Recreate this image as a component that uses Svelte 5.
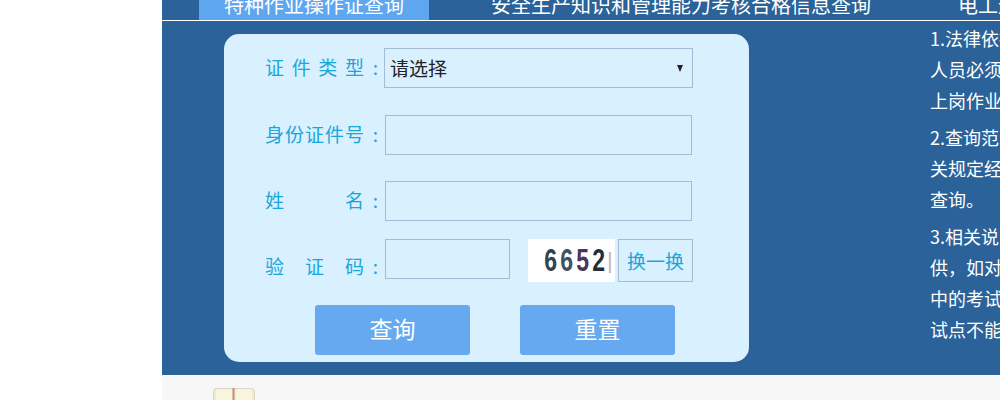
<script>
  const tabs = [
    { name: "特种作业操作证查询", active: true },
    { name: "安全生产知识和管理能力考核合格信息查询" },
    { name: "电工进网作业许可证查询" }
  ];

  const notes = [
    ["1.法律依据：根据有关规定", "人员必须经过培训考核", "上岗作业"],
    ["2.查询范围：依照国家有", "关规定经考核合格人员", "查询。"],
    ["3.相关说明：数据由各地提", "供，如对查询结果有异议", "中的考试信息", "试点不能查询"]
  ];

  const digits = [
    { n: "6", color: "#33424f" },
    { n: "6", color: "#3f5261" },
    { n: "5", color: "#4a3658" },
    { n: "2", color: "#262d33" }
  ];

  let type = "";
  let idCard = "";
  let name = "";
  let code = "";
</script>

<div class="page">
  <section class="query">
    <nav class="tabs">
      {#each tabs as tab}
        <a href="#top" class="tab" class:active={tab.active}>{tab.name}</a>
      {/each}
    </nav>

    <div class="content">
      <form class="panel" on:submit|preventDefault>
        <div class="row first">
          <label class="label" for="type"><span class="name">证件类型</span><span>:</span></label>
          <div class="selectWrap">
            <select id="type" bind:value={type}>
              <option value="">请选择</option>
              <option value="id">身份证</option>
            </select>
            <i class="arrow"></i>
          </div>
        </div>
        <div class="row second">
          <label class="label" for="idCard"><span class="name">身份证件号</span><span>:</span></label>
          <input id="idCard" class="field" bind:value={idCard} />
        </div>
        <div class="row third">
          <label class="label" for="name"><span class="name">姓名</span><span>:</span></label>
          <input id="name" class="field" bind:value={name} />
        </div>
        <div class="row fourth">
          <label class="label" for="code"><span class="name">验证码</span><span>:</span></label>
          <input id="code" class="field small" bind:value={code} />
          <div class="captcha">
            {#each digits as d}
              <span style="color: {d.color}">{d.n}</span>
            {/each}
            <b>|</b>
          </div>
          <button type="button" class="swap">换一换</button>
        </div>
        <div class="actions">
          <button type="submit" class="buttonPrimary">查询</button>
          <button type="reset" class="buttonPrimary">重置</button>
        </div>
      </form>

      <div class="notes">
        {#each notes as lines}
          <p>
            {#each lines as line}
              <span>{line}</span>
            {/each}
          </p>
        {/each}
      </div>
    </div>
  </section>

  <footer class="footer">
    <svg width="42" height="30" viewBox="0 0 42 30">
      <rect x="0.5" y="0.5" width="41" height="29" rx="3" fill="#efe9cf" stroke="#dcd6c2" />
      <rect x="3" y="1" width="16" height="28" rx="2" fill="#f8f5df" />
      <rect x="23" y="1" width="16" height="28" rx="2" fill="#f8f5df" />
      <path d="M20.5 0v30" stroke="#cf8a78" stroke-width="2" />
    </svg>
  </footer>
</div>

<style>
  :global(body) {
    background: #fff;
    overflow: hidden;
  }

  .page {
    width: 838px;
    height: 400px;
    margin-left: 162px;
    overflow: hidden;
    font-family: "Noto Sans CJK SC", "Liberation Sans", sans-serif;
  }

  .query {
    height: 375px;
    background: #2a6299;
  }

  .tabs {
    display: flex;
    height: 20px;
    padding-left: 37px;
    border-bottom: 1px solid #fff;
    box-sizing: content-box;
    white-space: nowrap;
  }

  .tab {
    flex: none;
    height: 20px;
    line-height: 10px;
    font-size: 20px;
    color: #fff;
    text-decoration: none;
    text-align: center;
    padding: 0 25px;
    margin-right: 37px;
    overflow: hidden;
  }

  .tab.active {
    background: #5ea6ee;
  }

  .content {
    display: flex;
    align-items: flex-start;
    padding: 13px 0 0 62px;
  }

  .panel {
    flex: none;
    width: 525px;
    height: 328px;
    box-sizing: border-box;
    padding: 14px 0 0 41px;
    background: #d9f0ff;
    border-radius: 15px;
  }

  .row {
    display: flex;
    align-items: flex-start;
  }

  .second {
    margin-top: 27px;
  }

  .third {
    margin-top: 26px;
  }

  .fourth {
    margin-top: 18px;
  }

  .label {
    flex: none;
    display: flex;
    justify-content: space-between;
    width: 113px;
    margin-right: 7px;
    font-size: 19px;
    line-height: 38px;
    color: #1ba6da;
  }

  .first .label {
    margin-right: 6px;
  }

  .fourth .label {
    padding-top: 8px;
  }

  .name {
    width: 99px;
    text-align-last: justify;
    text-justify: inter-character;
  }

  .selectWrap {
    position: relative;
    width: 309px;
    height: 40px;
  }

  select {
    appearance: none;
    width: 100%;
    height: 100%;
    box-sizing: border-box;
    padding: 0 5px;
    border: 1px solid #a3bcd8;
    border-radius: 0;
    background: transparent;
    font: inherit;
    font-size: 19px;
    line-height: 38px;
    color: #222;
  }

  .arrow {
    position: absolute;
    top: 17px;
    right: 10px;
    border-left: 3.5px solid transparent;
    border-right: 3.5px solid transparent;
    border-top: 7px solid #222;
  }

  .field {
    width: 307px;
    height: 40px;
    box-sizing: border-box;
    border: 1px solid #a3bcd8;
    background: transparent;
    font: inherit;
    font-size: 18px;
  }

  .field.small {
    width: 125px;
  }

  .captcha {
    display: flex;
    align-items: center;
    width: 87px;
    height: 43px;
    box-sizing: border-box;
    margin-left: 18px;
    padding-left: 14px;
    background: #fff;
    font-family: "Liberation Sans", sans-serif;
    font-size: 32px;
    font-weight: 700;
    overflow: hidden;
  }

  .captcha span {
    width: 16px;
    text-align: center;
    transform: scaleX(0.72);
  }

  .captcha b {
    font-weight: 400;
    font-size: 22px;
    color: #bbb;
    margin-left: 1px;
  }

  .swap {
    width: 75px;
    height: 43px;
    margin-left: 3px;
    padding: 0;
    border: 1px solid #a3bcd8;
    background: transparent;
    font: inherit;
    font-size: 19px;
    color: #1ba6da;
  }

  .actions {
    display: flex;
    gap: 50px;
    margin: 20px 0 0 50px;
  }

  .buttonPrimary {
    width: 155px;
    height: 50px;
    padding: 0 0 5px;
    border: none;
    border-radius: 3px;
    background: #66a9f0;
    color: #fff;
    font: inherit;
    font-size: 23px;
    line-height: 40px;
  }

  .notes {
    flex: none;
    width: 300px;
    margin-left: 181px;
    margin-top: -11px;
    color: #fff;
    font-size: 18px;
    line-height: 31px;
    white-space: nowrap;
  }

  .notes p {
    margin: 0 0 6px;
  }

  .notes span {
    display: block;
  }

  .footer {
    height: 25px;
    box-sizing: border-box;
    padding: 13px 0 0 51px;
    background: #f7f7f7;
    overflow: hidden;
  }
</style>
